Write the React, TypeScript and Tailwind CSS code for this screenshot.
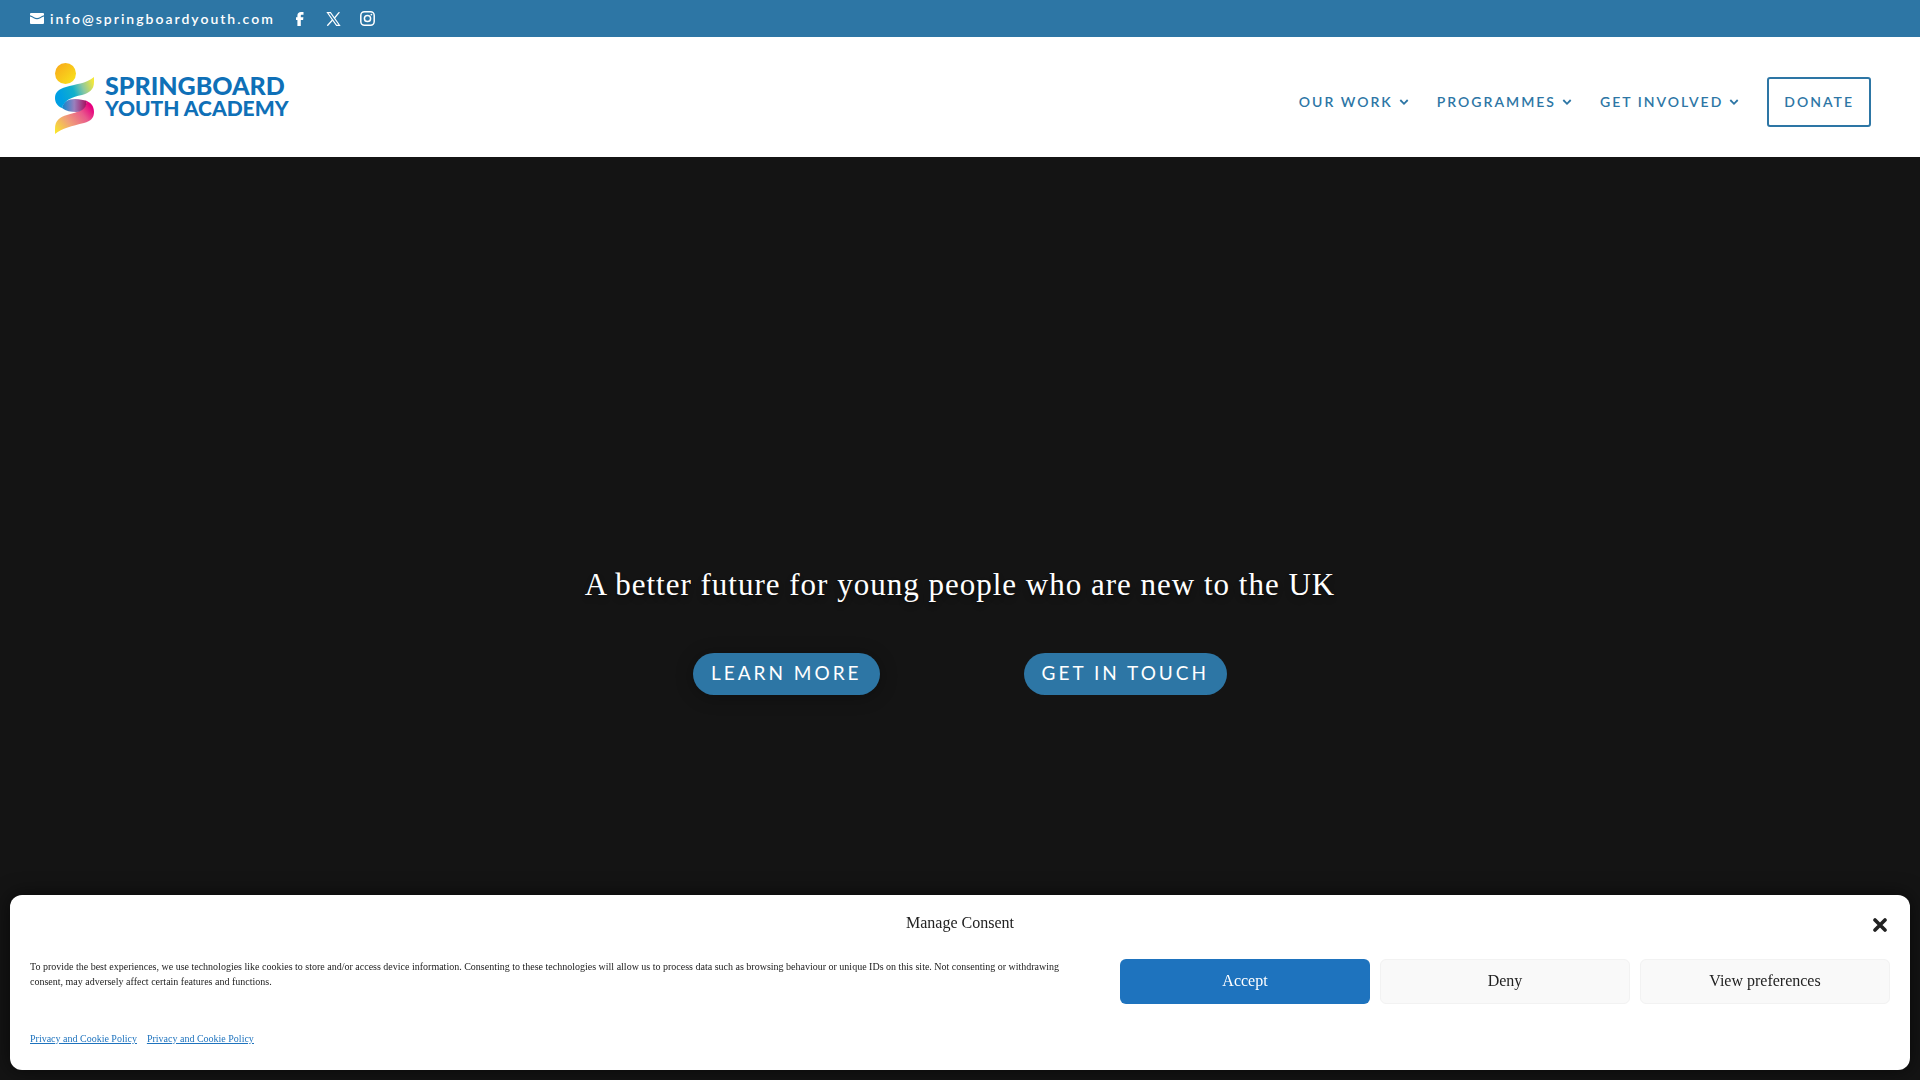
import React from "react";

const menu = ["Our Work", "Programmes", "Get Involved"];

const policies = ["Privacy and Cookie Policy", "Privacy and Cookie Policy"];

function Logo() {
  return (
    <a href="#" className="flex items-start gap-[10px] pt-1">
      <svg width="40" height="72" viewBox="0 0 40 72" aria-hidden="true">
        <defs>
          <linearGradient id="head" x1="0" y1="0" x2="1" y2="1">
            <stop offset="0" stopColor="#f9a61a" />
            <stop offset="1" stopColor="#f8e71c" />
          </linearGradient>
          <linearGradient id="top" x1="0" y1="0.5" x2="1" y2="0.2">
            <stop offset="0.1" stopColor="#009fe3" />
            <stop offset="0.45" stopColor="#12b0cb" />
            <stop offset="0.7" stopColor="#8cc8a0" />
            <stop offset="1" stopColor="#f4e83a" />
          </linearGradient>
          <linearGradient id="middle" x1="0" y1="0" x2="1" y2="0">
            <stop offset="0" stopColor="#0a86cc" />
            <stop offset="0.5" stopColor="#9a80bd" />
            <stop offset="1" stopColor="#a5105f" />
          </linearGradient>
          <linearGradient id="bottom" x1="0" y1="1" x2="1" y2="0.3">
            <stop offset="0" stopColor="#faed24" />
            <stop offset="0.4" stopColor="#f0a078" />
            <stop offset="0.75" stopColor="#e95a8c" />
            <stop offset="1" stopColor="#e6007e" />
          </linearGradient>
        </defs>
        <circle cx="10.5" cy="10.5" r="10.5" fill="url(#head)" />
        <path d="M0 71V66C0 57 5 54 12 52C18 50 28 49 31 41C32 39 31 38 29 37C36 39 39 43 39 49C39 55 36 58 29 60C17 63 7 65 0 71Z" fill="url(#bottom)" />
        <path d="M7 45C8 39 13 36 20 36C25 36 29 37 31 38C33 42 28 49 21 49C16 49 11 48 7 45Z" fill="url(#middle)" />
        <path d="M39 14V19C39 27 34 30 27 32C17 34 9 37 7 45C2 43 0 39 0 35C0 29 4 26 11 24C20 21 31 21 39 14Z" fill="url(#top)" />
      </svg>
      <span className="mt-[10px] flex flex-col font-['Lato'] font-black uppercase text-[#0f70b7]">
        <span className="text-[25px] leading-6">Springboard</span>
        <span className="text-[21px] leading-[22px]">Youth Academy</span>
      </span>
    </a>
  );
}

function TopBar() {
  return (
    <div className="flex h-[37px] items-center bg-[#2d76a5] px-[30px] text-white">
      <a
        href="mailto:info@springboardyouth.com"
        className="flex items-center gap-[6px] font-['Lato'] text-sm font-semibold tracking-[2px]"
      >
        <svg width="14" height="12" viewBox="0 0 14 12" fill="currentColor" aria-hidden="true">
          <path d="M1 0H13A1 1 0 0 1 14 1V2.3C11 3.2 9.5 5 7 5C4.500 5 3 3.200 0 2.300V1A1 1 0 0 1 1 0Z" />
          <path d="M0 3.400C3 4.300 4.500 6.200 7 6.200C9.500 6.200 11 4.300 14 3.400V10A1 1 0 0 1 13 11H1A1 1 0 0 1 0 10Z" />
        </svg>
        info@springboardyouth.com
      </a>
      <nav className="ml-[17px] flex items-center gap-[19px]" aria-label="Social">
        <a href="#" aria-label="Facebook">
          <svg width="15" height="14" viewBox="0 0 15 14" fill="currentColor" aria-hidden="true">
            <path d="M5.400 14V8H4V5.200H5.400V3.600C5.400 1.200 6.800 0 9 0H11.500V2.700H9.900C9.100 2.700 8.800 3 8.800 3.800V5.200H11.400L11.100 8H8.800V14Z" />
          </svg>
        </a>
        <a href="#" aria-label="X">
          <svg width="15" height="14" viewBox="0 0 15 14" fill="none" stroke="currentColor" aria-hidden="true">
            <path d="M1.400.6H4.500L13.600 13.400H10.500Z" strokeWidth="1.1" />
            <path d="M13.400.2L8.500 6M6.500 8L1.300 13.800" strokeWidth="1.3" />
          </svg>
        </a>
        <a href="#" aria-label="Instagram">
          <svg width="15" height="15" viewBox="0 0 15 15" fill="none" stroke="currentColor" aria-hidden="true">
            <rect x=".8" y=".8" width="13.4" height="13.4" rx="3.6" strokeWidth="1.5" />
            <circle cx="7.5" cy="7.5" r="3.1" strokeWidth="1.5" />
            <circle cx="11.4" cy="3.6" r=".9" fill="currentColor" stroke="none" />
          </svg>
        </a>
      </nav>
    </div>
  );
}

function Header() {
  return (
    <header className="flex h-[120px] items-center justify-between bg-white pl-[55px] pr-[49px]">
      <Logo />
      <nav className="mt-[10px] flex items-center gap-7 font-['Lato'] text-sm font-semibold uppercase tracking-[2px] text-[#2d76a5]">
        {menu.map((item) => (
          <a key={item} href="#" className="flex items-center gap-[6px]">
            {item}
            <svg width="10" height="8" viewBox="0 0 10 8" fill="none" stroke="currentColor" strokeWidth="1.8" aria-hidden="true">
              <path d="M1.3 2L5 5.8L8.7 2" />
            </svg>
          </a>
        ))}
        <a
          href="#"
          className="flex h-[50px] items-center rounded-[3px] border-2 border-[#2d76a5] px-[15px]"
        >
          Donate
        </a>
      </nav>
    </header>
  );
}

function Hero() {
  return (
    <main className="flex flex-1 flex-col items-center justify-center pt-[22px]">
      <h1 className="text-center text-[31px] leading-10 tracking-[1px] text-white text-shadow-lg">
        A better future for young people who are new to the UK
      </h1>
      <div className="mt-12 flex justify-center gap-36 font-['Lato'] text-[19px] uppercase tracking-[3px] text-white">
        <a
          href="#"
          className="flex h-[42px] items-center rounded-full bg-[#2d76a5] px-[18px] shadow-[0_2px_18px_rgba(0,0,0,0.3)]"
        >
          Learn More
        </a>
        <a href="#" className="flex h-[42px] items-center rounded-full bg-[#2d76a5] px-[18px]">
          Get in Touch
        </a>
      </div>
    </main>
  );
}

function CookieBanner() {
  return (
    <section
      aria-label="Manage Consent"
      className="fixed inset-x-[10px] bottom-[10px] rounded-xl bg-white px-5 pb-[21px] pt-4 text-[#222222] shadow-[0_0_20px_rgba(0,0,0,0.6)]"
    >
      <div className="grid grid-cols-[1fr_auto_1fr] items-center">
        <h2 className="col-start-2 text-base leading-6">Manage Consent</h2>
        <button type="button" aria-label="Close" className="mr-[3px] mt-1 justify-self-end">
          <svg width="14" height="14" viewBox="0 0 14 14" fill="none" stroke="#222222" strokeWidth="3.6" strokeLinecap="round" aria-hidden="true">
            <path d="M2 2L12 12M12 2L2 12" />
          </svg>
        </button>
      </div>
      <div className="mt-6 flex items-start justify-between gap-10">
        <p className="flex-1 text-[10px] leading-[15px]">
          To provide the best experiences, we use technologies like cookies to store and/or access
          device information. Consenting to these technologies will allow us to process data such as
          browsing behaviour or unique IDs on this site. Not consenting or withdrawing consent, may
          adversely affect certain features and functions.
        </p>
        <div className="flex gap-[10px] text-base">
          <button type="button" className="h-[45px] w-[250px] rounded-md bg-[#1e73be] pb-0.5 text-white">
            Accept
          </button>
          <button type="button" className="h-[45px] w-[250px] rounded-md border border-[#f2f2f2] bg-[#f9f9f9] pb-0.5">
            Deny
          </button>
          <button type="button" className="h-[45px] w-[250px] rounded-md border border-[#f2f2f2] bg-[#f9f9f9] pb-0.5">
            View preferences
          </button>
        </div>
      </div>
      <div className="mt-[25px] flex gap-[10px] text-[10px] leading-5 text-[#1e73be] underline">
        {policies.map((policy, index) => (
          <a key={index} href="#">
            {policy}
          </a>
        ))}
      </div>
    </section>
  );
}

export default function App() {
  return (
    <div className="flex min-h-screen flex-col bg-[#141414] font-['Liberation_Serif',serif]">
      <TopBar />
      <Header />
      <Hero />
      <CookieBanner />
    </div>
  );
}
